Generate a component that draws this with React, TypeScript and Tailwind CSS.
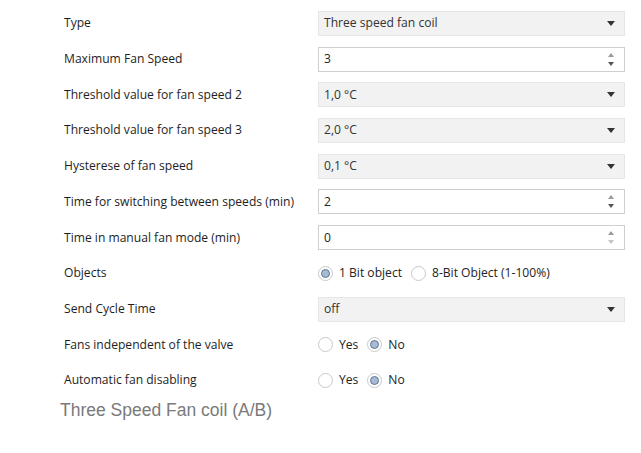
import { ReactNode } from 'react'

type Row =
  | { label: string; kind: 'select'; value: string }
  | { label: string; kind: 'spin'; value: string; downMuted?: boolean }
  | { label: string; kind: 'radio'; options: string[]; checked: number }

const rows: Row[] = [
  { label: 'Type', kind: 'select', value: 'Three speed fan coil' },
  { label: 'Maximum Fan Speed', kind: 'spin', value: '3' },
  { label: 'Threshold value for fan speed 2', kind: 'select', value: '1,0 °C' },
  { label: 'Threshold value for fan speed 3', kind: 'select', value: '2,0 °C' },
  { label: 'Hysterese of fan speed', kind: 'select', value: '0,1 °C' },
  { label: 'Time for switching between speeds (min)', kind: 'spin', value: '2' },
  { label: 'Time in manual fan mode (min)', kind: 'spin', value: '0', downMuted: true },
  { label: 'Objects', kind: 'radio', options: ['1 Bit object', '8-Bit Object (1-100%)'], checked: 0 },
  { label: 'Send Cycle Time', kind: 'select', value: 'off' },
  { label: 'Fans independent of the valve', kind: 'radio', options: ['Yes', 'No'], checked: 1 },
  { label: 'Automatic fan disabling', kind: 'radio', options: ['Yes', 'No'], checked: 1 },
]

function Caret() {
  return (
    <svg width="8" height="5" viewBox="0 0 8 5" className="shrink-0">
      <path d="M0 0h8L4 5z" fill="#333" />
    </svg>
  )
}

function Spinner({ downMuted }: { downMuted?: boolean }) {
  return (
    <div className="flex flex-col items-center gap-[5px]">
      <svg width="6" height="4" viewBox="0 0 6 4">
        <path d="M3 0l3 4H0z" fill="#9a9a9a" />
      </svg>
      <svg width="6" height="4" viewBox="0 0 6 4">
        <path d="M0 0h6L3 4z" fill={downMuted ? '#c4c4c4' : '#555'} />
      </svg>
    </div>
  )
}

function Radio({ on, children }: { on: boolean; children: ReactNode }) {
  return (
    <label className="flex items-center gap-[6px]">
      <span className="flex h-[15px] w-[15px] items-center justify-center rounded-full border border-[#c9c9c9] bg-white">
        {on && <span className="h-[9px] w-[9px] rounded-full border border-[#5b7696] bg-[#a7bad1]" />}
      </span>
      <span>{children}</span>
    </label>
  )
}

function Control({ row }: { row: Row }) {
  if (row.kind === 'select') {
    return (
      <div className="flex h-[25px] items-center justify-between border border-[#e6e6e6] bg-[#f2f2f2] pl-[5px] pr-[9px] text-[#333]">
        <span>{row.value}</span>
        <Caret />
      </div>
    )
  }
  if (row.kind === 'spin') {
    return (
      <div className="flex h-[25px] items-center justify-between border border-[#cfcfcf] bg-white pl-[5px] pr-[10px] text-[#222]">
        <span>{row.value}</span>
        <Spinner downMuted={row.downMuted} />
      </div>
    )
  }
  return (
    <div className="flex h-[25px] items-center gap-[9px] text-[#222]">
      {row.options.map((o, i) => (
        <Radio key={o} on={i === row.checked}>
          {o}
        </Radio>
      ))}
    </div>
  )
}

export default function App() {
  return (
    <div className="h-[453px] w-[641px] bg-white pt-[11px] text-[12.1px]" style={{ fontFamily: '"Open Sans", "Noto Sans", sans-serif' }}>
      <div className="flex flex-col">
        {rows.map((row) => (
          <div key={row.label} className="flex h-[35.7px] items-start">
            <div className="flex h-[25px] w-[318px] items-center pl-[64px] text-[#1e1e1e]">{row.label}</div>
            <div className="w-[307px]">
              <Control row={row} />
            </div>
          </div>
        ))}
      </div>
      <div
        className="mt-[-7px] pl-[60px] text-[17.5px] font-light text-[#7a7a7a]"
        style={{ fontFamily: '"Liberation Sans", Arial, sans-serif' }}
      >
        Three Speed Fan coil (A/B)
      </div>
    </div>
  )
}
